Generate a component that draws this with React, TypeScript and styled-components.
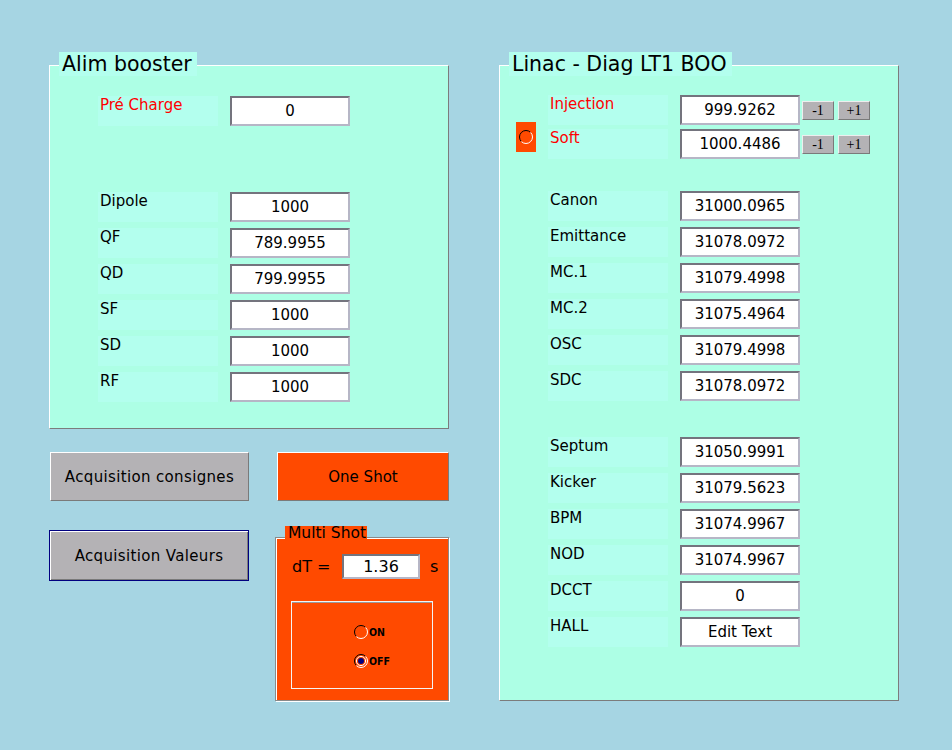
import React from "react";
import styled, { createGlobalStyle } from "styled-components";

const ORANGE = "#ff4a00";
const PANEL = "#adffe5";
const LABEL_BG = "#b3ffee";
const GRAY = "#b4b2b5";
const FONT = `"DejaVu Sans", "Liberation Sans", sans-serif`;

const Global = createGlobalStyle`
  * { box-sizing: border-box; }
  html, body { margin: 0; padding: 0; background: #a6d5e3; }
  body { font-family: ${FONT}; width: 952px; height: 750px; overflow: hidden; }
`;

const Page = styled.div`
  display: flex;
  gap: 50px;
  padding: 65px 0 0 49px;
  width: 952px;
  height: 750px;
`;

const Column = styled.div`
  display: flex;
  flex-direction: column;
  width: 400px;
`;

const Panel = styled.section<{ $h: number; $pt: number; $pl: number }>`
  position: relative;
  width: 400px;
  height: ${(p) => p.$h}px;
  background: ${PANEL};
  border-style: solid;
  border-width: 1px;
  border-color: #ffffff #7c7c7c #7c7c7c #ffffff;
  padding: ${(p) => p.$pt}px 0 0 ${(p) => p.$pl}px;
  display: flex;
  flex-direction: column;
`;

const Legend = styled.h2`
  position: absolute;
  top: -14px;
  left: 9px;
  margin: 0;
  background: ${LABEL_BG};
  color: #000;
  font-family: ${FONT};
  font-size: 20.5px;
  font-weight: normal;
  line-height: 24px;
  padding: 0 5px 0 3px;
  white-space: nowrap;
`;

const FieldGrid = styled.div<{ $mt: number; $ml?: number }>`
  display: grid;
  grid-template-columns: 120px 120px;
  column-gap: 12px;
  row-gap: 6px;
  grid-auto-rows: 30px;
  margin-top: ${(p) => p.$mt}px;
  margin-left: ${(p) => p.$ml ?? 0}px;
`;

const TopGrid = styled.div`
  display: grid;
  grid-template-columns: 32px 132px 122px 36px 32px;
  grid-template-rows: 30px 30px;
  row-gap: 4px;
`;

const Label = styled.div<{ $red?: boolean }>`
  width: 120px;
  height: 30px;
  background: ${LABEL_BG};
  color: ${(p) => (p.$red ? "#ff0000" : "#000")};
  font-size: 15px;
  line-height: 17px;
  padding: 1px 0 0 2px;
  white-space: nowrap;
`;

const Field = styled.input<{ $w?: number; $h?: number; $fs?: number }>`
  width: ${(p) => p.$w ?? 120}px;
  height: ${(p) => p.$h ?? 30}px;
  margin: 0;
  padding: 0;
  background: #fff;
  border-style: solid;
  border-width: 2px;
  border-color: #74747e #b6b6c6 #b6b6c6 #74747e;
  font-family: ${FONT};
  font-size: ${(p) => p.$fs ?? 15}px;
  color: #000;
  text-align: center;
  outline: none;
`;

const StepButton = styled.button`
  width: 32px;
  height: 19px;
  margin: 0;
  padding: 0;
  align-self: center;
  background: ${GRAY};
  border: 1px solid;
  border-color: #eeeeee #7a7a7a #7a7a7a #eeeeee;
  font-family: "Liberation Serif", serif;
  font-size: 14px;
  line-height: 17px;
  color: #000;
`;

const Indicator = styled.div`
  grid-column: 1;
  grid-row: 1 / 3;
  align-self: end;
  margin-bottom: 7px;
  width: 20px;
  height: 30px;
  background: ${ORANGE};
  display: flex;
  align-items: center;
  justify-content: center;
`;

const Controls = styled.div`
  display: flex;
  gap: 26px;
  margin-top: 23px;
`;

const ControlColumn = styled.div<{ $w: number }>`
  display: flex;
  flex-direction: column;
  width: ${(p) => p.$w}px;
`;

const BigButton = styled.button<{ $orange?: boolean; $focused?: boolean; $h: number; $ml?: number; $mt?: number }>`
  height: ${(p) => p.$h}px;
  margin: ${(p) => p.$mt ?? 0}px 0 0 ${(p) => p.$ml ?? 0}px;
  padding: 0;
  background: ${(p) => (p.$orange ? ORANGE : GRAY)};
  border: 1px solid;
  border-color: ${(p) => (p.$focused ? "#000080" : "#ffffff #7a7a7a #7a7a7a #ffffff")};
  box-shadow: ${(p) => (p.$focused ? "inset 1px 1px 0 #ffffff, inset -1px -1px 0 #7a7a7a" : "none")};
  font-family: ${FONT};
  font-size: 15px;
  letter-spacing: ${(p) => (p.$orange ? 0 : 0.35)}px;
  color: #000;
`;

const MultiShot = styled.div`
  position: relative;
  margin-top: 36px;
  height: 164px;
  background: ${ORANGE};
  border: 1px solid #8a8a8a;
  box-shadow: inset 1px 1px 0 #ffffff, 1px 1px 0 #ffffff;
  padding: 16px 0 0 16px;
`;

const MultiLegend = styled.div`
  position: absolute;
  top: -12px;
  left: 9px;
  background: ${ORANGE};
  color: #000;
  font-size: 15.5px;
  line-height: 14px;
  padding: 0 1px 0 3px;
  white-space: nowrap;
`;

const DtRow = styled.div`
  display: grid;
  grid-template-columns: 40px 78px auto;
  column-gap: 10px;
  align-items: center;
  height: 25px;
  font-size: 16px;
  color: #000;
`;

const RadioBox = styled.div`
  width: 142px;
  height: 88px;
  margin: 22px 0 0 -1px;
  border: 1px solid #f4f4f4;
  box-shadow: inset 0 1px 0 #9a9a9a;
  padding: 23px 0 0 62px;
  display: flex;
  flex-direction: column;
  gap: 15px;
`;

const RadioRow = styled.label`
  display: flex;
  align-items: center;
  height: 14px;
  gap: 1px;
  font-family: "DejaVu Sans Condensed", "DejaVu Sans", sans-serif;
  font-size: 10.5px;
  font-weight: 600;
  color: #000;
`;

const RadioIcon = ({ checked }: { checked?: boolean }) => (
  <svg width="14" height="14" viewBox="0 0 14 14">
    <path d="M2.4 11.6 A6.5 6.5 0 0 1 11.6 2.4" fill="none" stroke="#000" strokeWidth="1" />
    <path d="M11.6 2.4 A6.5 6.5 0 0 1 2.4 11.6" fill="none" stroke="#fff" strokeWidth="1" />
    {checked && (
      <>
        <circle cx="7" cy="7" r="4.6" fill="none" stroke="#fff" strokeWidth="1" />
        <circle cx="7" cy="7" r="3" fill="#000080" />
      </>
    )}
  </svg>
);

type Row = { label: string; value: string; red?: boolean };

const leftTop: Row[] = [{ label: "Pré Charge", value: "0", red: true }];
const leftMain: Row[] = [
  { label: "Dipole", value: "1000" },
  { label: "QF", value: "789.9955" },
  { label: "QD", value: "799.9955" },
  { label: "SF", value: "1000" },
  { label: "SD", value: "1000" },
  { label: "RF", value: "1000" },
];
const linacTop: Row[] = [
  { label: "Injection", value: "999.9262", red: true },
  { label: "Soft", value: "1000.4486", red: true },
];
const linacMid: Row[] = [
  { label: "Canon", value: "31000.0965" },
  { label: "Emittance", value: "31078.0972" },
  { label: "MC.1", value: "31079.4998" },
  { label: "MC.2", value: "31075.4964" },
  { label: "OSC", value: "31079.4998" },
  { label: "SDC", value: "31078.0972" },
];
const linacLow: Row[] = [
  { label: "Septum", value: "31050.9991" },
  { label: "Kicker", value: "31079.5623" },
  { label: "BPM", value: "31074.9967" },
  { label: "NOD", value: "31074.9967" },
  { label: "DCCT", value: "0" },
  { label: "HALL", value: "Edit Text" },
];

const Rows = ({ rows }: { rows: Row[] }) => (
  <>
    {rows.map((r) => (
      <React.Fragment key={r.label}>
        <Label $red={r.red}>{r.label}</Label>
        <Field readOnly value={r.value} />
      </React.Fragment>
    ))}
  </>
);

export default function App() {
  return (
    <>
      <Global />
      <Page>
        <Column>
          <Panel $h={364} $pt={30} $pl={48}>
            <Legend>Alim booster</Legend>
            <FieldGrid $mt={0}>
              <Rows rows={leftTop} />
            </FieldGrid>
            <FieldGrid $mt={66}>
              <Rows rows={leftMain} />
            </FieldGrid>
          </Panel>
          <Controls>
            <ControlColumn $w={200}>
              <BigButton $h={49} $ml={1}>Acquisition consignes</BigButton>
              <BigButton $h={51} $mt={29} $focused>Acquisition Valeurs</BigButton>
            </ControlColumn>
            <ControlColumn $w={174}>
              <BigButton $h={49} $ml={2} $orange>One Shot</BigButton>
              <MultiShot>
                <MultiLegend>Multi Shot</MultiLegend>
                <DtRow>
                  <span>dT =</span>
                  <Field readOnly value="1.36" $w={78} $h={25} $fs={16} />
                  <span>s</span>
                </DtRow>
                <RadioBox>
                  <RadioRow>
                    <RadioIcon />
                    ON
                  </RadioRow>
                  <RadioRow>
                    <RadioIcon checked />
                    OFF
                  </RadioRow>
                </RadioBox>
              </MultiShot>
            </ControlColumn>
          </Controls>
        </Column>
        <Column>
          <Panel $h={636} $pt={29} $pl={16}>
            <Legend>Linac - Diag LT1 BOO</Legend>
            <TopGrid>
              {linacTop.map((r, i) => (
                <React.Fragment key={r.label}>
                  <Label $red style={{ gridColumn: 2, gridRow: i + 1 }}>{r.label}</Label>
                  <Field readOnly value={r.value} style={{ gridColumn: 3, gridRow: i + 1 }} />
                  <StepButton style={{ gridColumn: 4, gridRow: i + 1 }}>-1</StepButton>
                  <StepButton style={{ gridColumn: 5, gridRow: i + 1 }}>+1</StepButton>
                </React.Fragment>
              ))}
              <Indicator>
                <RadioIcon />
              </Indicator>
            </TopGrid>
            <FieldGrid $mt={32} $ml={32}>
              <Rows rows={linacMid} />
            </FieldGrid>
            <FieldGrid $mt={36} $ml={32}>
              <Rows rows={linacLow} />
            </FieldGrid>
          </Panel>
        </Column>
      </Page>
    </>
  );
}
